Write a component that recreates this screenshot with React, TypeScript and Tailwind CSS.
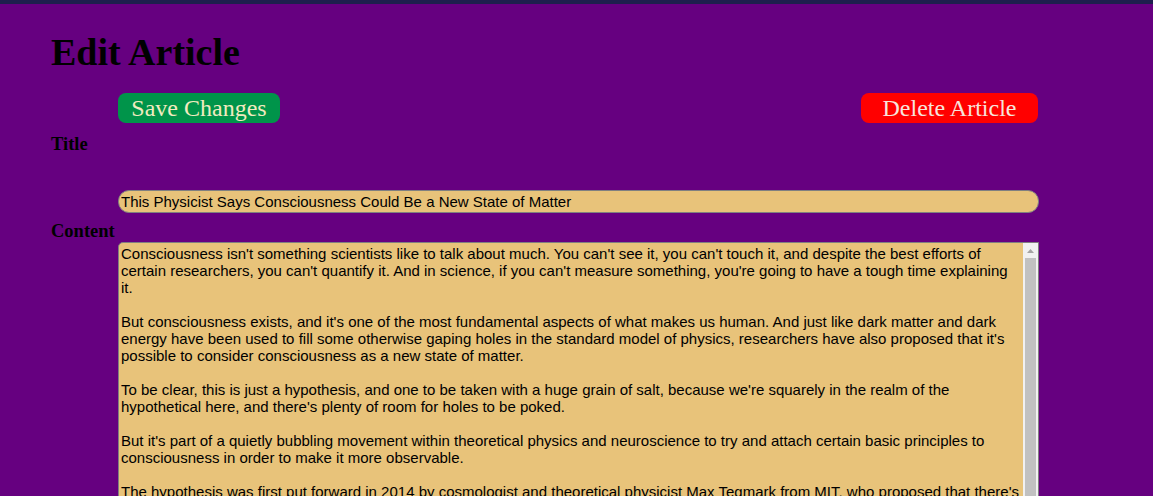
import React from "react";

const CONTENT = `Consciousness isn't something scientists like to talk about much. You can't see it, you can't touch it, and despite the best efforts of certain researchers, you can't quantify it. And in science, if you can't measure something, you're going to have a tough time explaining it.

But consciousness exists, and it's one of the most fundamental aspects of what makes us human. And just like dark matter and dark energy have been used to fill some otherwise gaping holes in the standard model of physics, researchers have also proposed that it's possible to consider consciousness as a new state of matter.

To be clear, this is just a hypothesis, and one to be taken with a huge grain of salt, because we're squarely in the realm of the hypothetical here, and there's plenty of room for holes to be poked.

But it's part of a quietly bubbling movement within theoretical physics and neuroscience to try and attach certain basic principles to consciousness in order to make it more observable.

The hypothesis was first put forward in 2014 by cosmologist and theoretical physicist Max Tegmark from MIT, who proposed that there's a state of matter - just like a solid, a liquid, or a gas - in which atoms are arranged to process information and give rise to subjectivity, and ultimately, consciousness.

The name of this proposed state of matter? Perceptronium, of course.

As Tegmark explains in his pre-published paper, "Generations of physicists and chemists have studied what happens when you group together vast numbers of atoms, finding that their collective behavior depends on the pattern in which they are arranged: the key difference between a solid, a liquid, and a gas lies not in the types of atoms, but in their arrangement."

"In this paper, I conjecture that consciousness can be understood as yet another state of matter. Just as there are many types of liquids, there are many types of consciousness."

"However, this should not preclude us from identifying, quantifying, modelling, and ultimately understanding the characteristic properties that all liquid forms of matter (or all conscious forms of matter) share."`;

export default function App() {
  return (
    <div className="min-h-screen bg-[#660080] border-t-4 border-[#1e1f4e] pl-[51px] font-['Liberation_Serif',serif]">
      <h1 className="pt-[26px] text-[38px] leading-[44px] font-bold text-black">Edit Article</h1>
      <div className="mt-[19px] ml-[67px] w-[920px] flex justify-between">
        <button className="w-[162px] h-[30px] rounded-[8px] bg-[#00944a] text-[#f2ebc0] text-[24px] leading-[30px] text-center font-['Liberation_Serif',serif]">
          Save Changes
        </button>
        <button className="w-[177px] h-[30px] rounded-[8px] bg-[#ff0000] text-[#f7e4dc] text-[24px] leading-[30px] text-center font-['Liberation_Serif',serif]">
          Delete Article
        </button>
      </div>
      <label className="block mt-[10px] text-[18.5px] leading-[22px] font-bold text-black">Title</label>
      <input
        className="block mt-[35px] ml-[67px] w-[921px] h-[23px] px-[2px] rounded-[11px] border border-[#808080] bg-[#e8c37a] text-black text-[15px] leading-[17px] font-['Liberation_Sans',sans-serif] outline-none"
        defaultValue="This Physicist Says Consciousness Could Be a New State of Matter"
      />
      <label className="block mt-[7px] text-[18.5px] leading-[22px] font-bold text-black">Content</label>
      <div className="ml-[67px] w-[921px] h-[420px] flex rounded-tl-[5px] border border-[#808080] bg-[#e8c37a] overflow-hidden">
        <textarea
          className="flex-1 h-full p-[2px] bg-transparent text-black text-[15px] leading-[17px] font-['Liberation_Sans',sans-serif] outline-none resize-none overflow-hidden"
          defaultValue={CONTENT}
        />
        <div className="w-[15px] h-full flex flex-col bg-[#f1f1f1]">
          <div className="h-[15px] flex items-center justify-center">
            <svg width="7" height="4" viewBox="0 0 7 4">
              <polygon points="3.5,0 7,4 0,4" fill="#a3a3a3" />
            </svg>
          </div>
          <div className="mx-[2px] flex-1 bg-[#c1c1c1]" />
        </div>
      </div>
    </div>
  );
}
